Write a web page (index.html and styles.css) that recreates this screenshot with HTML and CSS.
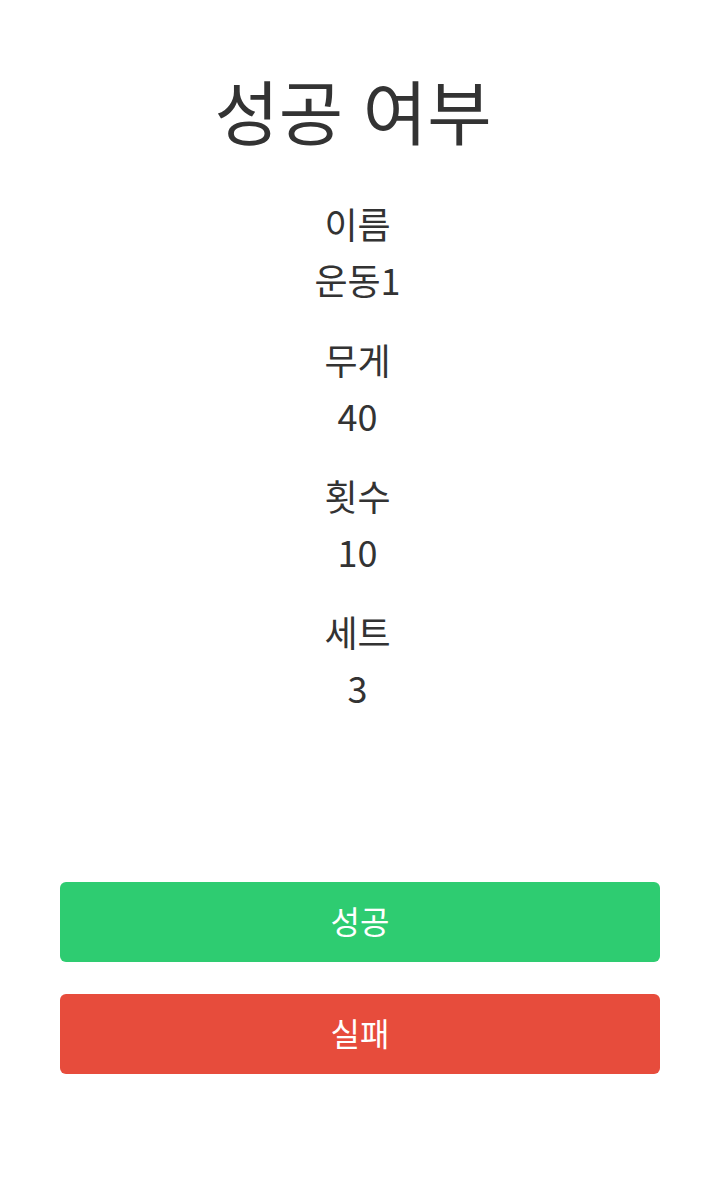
FILE: index.html
```html
<!DOCTYPE html>
<html lang="ko">
<head>
<meta charset="utf-8">
<link rel="stylesheet" href="styles.css">
</head>
<body>
<main class="page">
  <h1 class="title">성공 여부</h1>
  <section class="details">
    <div class="field"><div class="label">이름</div><div class="value">운동1</div></div>
    <div class="field"><div class="label">무게</div><div class="value">40</div></div>
    <div class="field"><div class="label">횟수</div><div class="value">10</div></div>
    <div class="field"><div class="label">세트</div><div class="value">3</div></div>
  </section>
  <div class="actions">
    <button class="btn btn-success">성공</button>
    <button class="btn btn-fail">실패</button>
  </div>
</main>
</body>
</html>
```

FILE: styles.css
```css
html, body {
  margin: 0;
  padding: 0;
  background: #ffffff;
}
body {
  font-family: "Noto Sans CJK KR", "Noto Sans", sans-serif;
  color: #333333;
}
.page {
  display: flex;
  flex-direction: column;
  align-items: stretch;
  padding: 60px 60px 0;
}
.title {
  margin: 0 14px 0 0;
  font-size: 70px;
  font-weight: 400;
  line-height: 100px;
  text-align: center;
}
.details {
  margin: 35px 5px 0 0;
  display: flex;
  flex-direction: column;
  gap: 24px;
  text-align: center;
}
.field {
  display: flex;
  flex-direction: column;
}
.label, .value {
  font-size: 36px;
  line-height: 56px;
}
.actions {
  margin-top: 167px;
  display: flex;
  flex-direction: column;
  gap: 32px;
}
.btn {
  height: 80px;
  border: none;
  border-radius: 6px;
  font-family: inherit;
  font-size: 32px;
  color: #ffffff;
  padding: 0 0 4px;
}
.btn-success { background: #2ecc71; }
.btn-fail { background: #e74c3c; }
```
